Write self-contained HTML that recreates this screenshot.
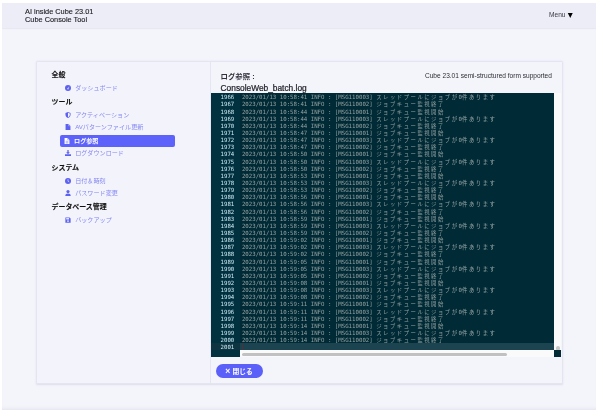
<!DOCTYPE html>
<html lang="ja">
<head>
<meta charset="utf-8">
<title>Cube Console Tool</title>
<style>
*{box-sizing:border-box;margin:0;padding:0}
html,body{width:600px;height:414px;overflow:hidden;background:#fff}
body{position:relative;font-family:"Liberation Sans","Noto Sans CJK JP",sans-serif;color:#222}
#screen{will-change:transform;position:absolute;left:2px;top:3px;width:594px;height:407px;background:#f4f4fb;overflow:hidden;
  box-shadow:inset 0 -4px 4px -3.2px rgba(110,110,130,.13)}
#hdr{position:absolute;left:0;top:0;width:594px;height:25px;background:#ededf7;
  box-shadow:0 .5px 1.5px rgba(120,120,160,.25)}
#brand{position:absolute;left:23px;top:5.4px;font-size:7.37px;line-height:7.83px;color:#1c1c24;white-space:nowrap;-webkit-text-stroke:.12px #1c1c24}
#menu{position:absolute;left:547px;top:8.2px;font-size:6.6px;line-height:8px;color:#3a3a44;white-space:nowrap}
#menu b{font-weight:normal;color:#000;font-size:8.6px;position:absolute;left:17.1px;top:-.1px}
#card{position:absolute;left:34px;top:58px;width:527px;height:322.5px;background:#f4f4fb;border:1px solid #e5e5f2;
  border-radius:1.5px;box-shadow:0 .5px 1.8px rgba(110,110,170,.16)}
#side{position:absolute;left:0;top:0;width:174px;height:100%;background:#f3f3fb;border-right:1px solid #e6e6f3}
.h{position:absolute;left:14.5px;font-size:6.95px;line-height:10px;font-weight:bold;color:#111;white-space:nowrap;-webkit-text-stroke:.12px #111}
.it{position:absolute;left:28px;margin-top:.5px;font-size:6.1px;line-height:10px;color:#8487f3;white-space:nowrap;height:10px}
.it svg{position:absolute;left:.2px;top:2px;width:6px;height:6px;fill:#5d61f2}
.it span{position:absolute;left:10.2px;top:0}
.it.sel{margin-top:0;left:23.3px;width:114.5px;height:12px;background:#5d63fa;border-radius:2px;color:#fff;font-weight:bold}
.it.sel svg{left:4.2px;top:3px;fill:#fff}
.it.sel span{left:13.8px;top:1px}
#main{position:absolute;left:174.2px;top:0;right:0;height:100%}
#t1{position:absolute;left:9.4px;top:10.2px;font-size:7.4px;line-height:10px;font-weight:bold;color:#33333d;white-space:nowrap}
#t2{position:absolute;left:9.4px;top:21.3px;font-size:8.36px;line-height:10px;color:#1e1e26;white-space:nowrap;-webkit-text-stroke:.22px #1e1e26}
#sub{position:absolute;right:10.1px;top:9.6px;font-size:6.57px;line-height:8px;color:#2c2c34;white-space:nowrap}
#ed{position:absolute;left:0;top:31.3px;width:350px;height:264.2px;background:#fafafa;overflow:hidden}
#gut{position:absolute;left:0;top:0;width:29px;height:264.2px;background:#01313f;color:#d0edf7}
#gut div{height:7.143px;line-height:9.54px;padding-left:9.4px}
#gut .ga{background:#0d3440}
#txt{position:absolute;left:29px;top:0;width:314px;height:257.2px;background:#002b36;color:#93a1a1;overflow:hidden}
#txt div{height:7.143px;line-height:9.54px;padding-left:1.7px;font-size:5.72px;white-space:pre}
#txt i{font-style:normal;font-size:5.4px;letter-spacing:1.48px}
#txt .al{background:#1b4450;position:relative}
.cur{position:absolute;left:1.9px;top:0;width:.7px;height:7.143px;background:rgba(211,1,2,.28)}
#gut,#txt{font-family:"DejaVu Sans Mono","Liberation Mono","Noto Sans Mono CJK JP","Noto Sans CJK JP",monospace;font-size:5.68px}
#hs{position:absolute;left:31px;top:259.3px;width:265px;height:3.2px;border-radius:1.6px;background:#c1c1c1}
#vs{position:absolute;left:344.9px;top:252.5px;width:4px;height:5.2px;border-radius:2px;background:#c6c6c6}
#corner{position:absolute;left:343px;top:257.2px;width:7px;height:7px;background:#022b36}
#btn{position:absolute;left:4.7px;top:301.7px;width:47.6px;height:14.2px;border-radius:7.1px;background:#5b60f9;color:#fff;
  font-size:6.75px;line-height:14.2px;text-align:center;font-weight:bold;white-space:nowrap}
#btn b{font-size:8.6px;font-weight:bold;position:relative;top:.5px;margin-right:.3px;margin-left:-1.2px}

</style>
</head>
<body>
<div id="screen">
  <div id="hdr">
    <div id="brand">AI inside Cube 23.01<br>Cube Console Tool</div>
    <div id="menu">Menu <b>&#9660;</b></div>
  </div>
  <div id="card">
    <div id="side">
      <div class="h" style="top:7.5px">全般</div>
      <div class="it" style="top:20.3px"><svg viewBox="0 0 16 16"><circle cx="8" cy="8" r="8"/><path d="M10.6 4.600 8 9.800" stroke="#f3f3fb" stroke-width="1.500" fill="none" opacity=".9"/><circle cx="8" cy="10" r="1.900" fill="#f3f3fb" opacity=".85"/></svg><span>ダッシュボード</span></div>
      <div class="h" style="top:35px">ツール</div>
      <div class="it" style="top:47.8px"><svg viewBox="0 0 16 16"><path d="M8 0 1.2 2.6v4.6c0 4.2 2.8 7.4 6.8 8.8 4-1.400 6.800-4.600 6.800-8.800V2.600z"/><path d="M8 2.200v11.600c2.800-1.200 4.800-3.600 4.800-6.600V3.900z" fill="#f3f3fb"/></svg><span>アクティベーション</span></div>
      <div class="it" style="top:59.9px"><svg viewBox="0 0 16 16"><path d="M1.500 0h8l5 5v11h-13z"/><path d="M9.500 0v5h5" fill="none" stroke="#f3f3fb" stroke-width=".9"/></svg><span>AVパターンファイル更新</span></div>
      <div class="it sel" style="top:72.900px"><svg viewBox="0 0 16 16"><path d="M1.500 0h8l5 5v11h-13z"/><path d="M9.500 0v5h5" fill="none" stroke="#5d63fa" stroke-width=".9"/><path d="M4.500 8.500h7M4.500 11h7M4.500 13.500h7" stroke="#5d63fa" stroke-width="1.100"/></svg><span>ログ参照</span></div>
      <div class="it" style="top:85.6px"><svg viewBox="0 0 16 16"><path d="M6.300 0h3.400v6H13l-5 5.300L3 6h3.300zM0 11.500h16V16H0z"/></svg><span>ログダウンロード</span></div>
      <div class="h" style="top:100.800px">システム</div>
      <div class="it" style="top:113.700px"><svg viewBox="0 0 16 16"><circle cx="8" cy="8" r="8"/><path d="M8 3.400V8.600l3.200 1.800" stroke="#f3f3fb" stroke-width="1.700" fill="none"/></svg><span>日付＆時刻</span></div>
      <div class="it" style="top:125.700px"><svg viewBox="0 0 16 16"><circle cx="8" cy="4.200" r="4.200"/><path d="M0.800 16c0-4.200 2.600-6.400 7.200-6.400s7.200 2.200 7.200 6.400z"/></svg><span>パスワード変更</span></div>
      <div class="h" style="top:140px">データベース管理</div>
      <div class="it" style="top:152.7px"><svg viewBox="0 0 16 16"><path d="M1 1h11l3 3v11H1z"/><rect x="3.300" y="3" width="7.500" height="3.600" fill="#f3f3fb"/><circle cx="8" cy="10.800" r="2.300" fill="#f3f3fb"/></svg><span>バックアップ</span></div>
    </div>
    <div id="main">
      <div id="t1">ログ参照 :</div>
      <div id="t2">ConsoleWeb_batch.log</div>
      <div id="sub">Cube 23.01 semi-structured form supported</div>
      <div id="ed">
        <div id="gut">
<div>1966</div>
<div>1967</div>
<div>1968</div>
<div>1969</div>
<div>1970</div>
<div>1971</div>
<div>1972</div>
<div>1973</div>
<div>1974</div>
<div>1975</div>
<div>1976</div>
<div>1977</div>
<div>1978</div>
<div>1979</div>
<div>1980</div>
<div>1981</div>
<div>1982</div>
<div>1983</div>
<div>1984</div>
<div>1985</div>
<div>1986</div>
<div>1987</div>
<div>1988</div>
<div>1989</div>
<div>1990</div>
<div>1991</div>
<div>1992</div>
<div>1993</div>
<div>1994</div>
<div>1995</div>
<div>1996</div>
<div>1997</div>
<div>1998</div>
<div>1999</div>
<div>2000</div>
<div class="ga">2001</div>
        </div>
        <div id="txt">
<div>2023/01/13 10:58:41 INFO : [MSG110003] <i>スレッドプールにジョブが</i>0<i>件あります</i></div>
<div>2023/01/13 10:58:41 INFO : [MSG110002] <i>ジョブキュー監視終了</i></div>
<div>2023/01/13 10:58:44 INFO : [MSG110001] <i>ジョブキュー監視開始</i></div>
<div>2023/01/13 10:58:44 INFO : [MSG110003] <i>スレッドプールにジョブが</i>0<i>件あります</i></div>
<div>2023/01/13 10:58:44 INFO : [MSG110002] <i>ジョブキュー監視終了</i></div>
<div>2023/01/13 10:58:47 INFO : [MSG110001] <i>ジョブキュー監視開始</i></div>
<div>2023/01/13 10:58:47 INFO : [MSG110003] <i>スレッドプールにジョブが</i>0<i>件あります</i></div>
<div>2023/01/13 10:58:47 INFO : [MSG110002] <i>ジョブキュー監視終了</i></div>
<div>2023/01/13 10:58:50 INFO : [MSG110001] <i>ジョブキュー監視開始</i></div>
<div>2023/01/13 10:58:50 INFO : [MSG110003] <i>スレッドプールにジョブが</i>0<i>件あります</i></div>
<div>2023/01/13 10:58:50 INFO : [MSG110002] <i>ジョブキュー監視終了</i></div>
<div>2023/01/13 10:58:53 INFO : [MSG110001] <i>ジョブキュー監視開始</i></div>
<div>2023/01/13 10:58:53 INFO : [MSG110003] <i>スレッドプールにジョブが</i>0<i>件あります</i></div>
<div>2023/01/13 10:58:53 INFO : [MSG110002] <i>ジョブキュー監視終了</i></div>
<div>2023/01/13 10:58:56 INFO : [MSG110001] <i>ジョブキュー監視開始</i></div>
<div>2023/01/13 10:58:56 INFO : [MSG110003] <i>スレッドプールにジョブが</i>0<i>件あります</i></div>
<div>2023/01/13 10:58:56 INFO : [MSG110002] <i>ジョブキュー監視終了</i></div>
<div>2023/01/13 10:58:59 INFO : [MSG110001] <i>ジョブキュー監視開始</i></div>
<div>2023/01/13 10:58:59 INFO : [MSG110003] <i>スレッドプールにジョブが</i>0<i>件あります</i></div>
<div>2023/01/13 10:58:59 INFO : [MSG110002] <i>ジョブキュー監視終了</i></div>
<div>2023/01/13 10:59:02 INFO : [MSG110001] <i>ジョブキュー監視開始</i></div>
<div>2023/01/13 10:59:02 INFO : [MSG110003] <i>スレッドプールにジョブが</i>0<i>件あります</i></div>
<div>2023/01/13 10:59:02 INFO : [MSG110002] <i>ジョブキュー監視終了</i></div>
<div>2023/01/13 10:59:05 INFO : [MSG110001] <i>ジョブキュー監視開始</i></div>
<div>2023/01/13 10:59:05 INFO : [MSG110003] <i>スレッドプールにジョブが</i>0<i>件あります</i></div>
<div>2023/01/13 10:59:05 INFO : [MSG110002] <i>ジョブキュー監視終了</i></div>
<div>2023/01/13 10:59:08 INFO : [MSG110001] <i>ジョブキュー監視開始</i></div>
<div>2023/01/13 10:59:08 INFO : [MSG110003] <i>スレッドプールにジョブが</i>0<i>件あります</i></div>
<div>2023/01/13 10:59:08 INFO : [MSG110002] <i>ジョブキュー監視終了</i></div>
<div>2023/01/13 10:59:11 INFO : [MSG110001] <i>ジョブキュー監視開始</i></div>
<div>2023/01/13 10:59:11 INFO : [MSG110003] <i>スレッドプールにジョブが</i>0<i>件あります</i></div>
<div>2023/01/13 10:59:11 INFO : [MSG110002] <i>ジョブキュー監視終了</i></div>
<div>2023/01/13 10:59:14 INFO : [MSG110001] <i>ジョブキュー監視開始</i></div>
<div>2023/01/13 10:59:14 INFO : [MSG110003] <i>スレッドプールにジョブが</i>0<i>件あります</i></div>
<div>2023/01/13 10:59:14 INFO : [MSG110002] <i>ジョブキュー監視終了</i></div>
<div class="al"><span class="cur"></span></div>
        </div>
        <div id="hs"></div>
        <div id="vs"></div>
        <div id="corner"></div>
      </div>
      <div id="btn"><b>×</b> 閉じる</div>
    </div>
  </div>
</div>

</body>
</html>
